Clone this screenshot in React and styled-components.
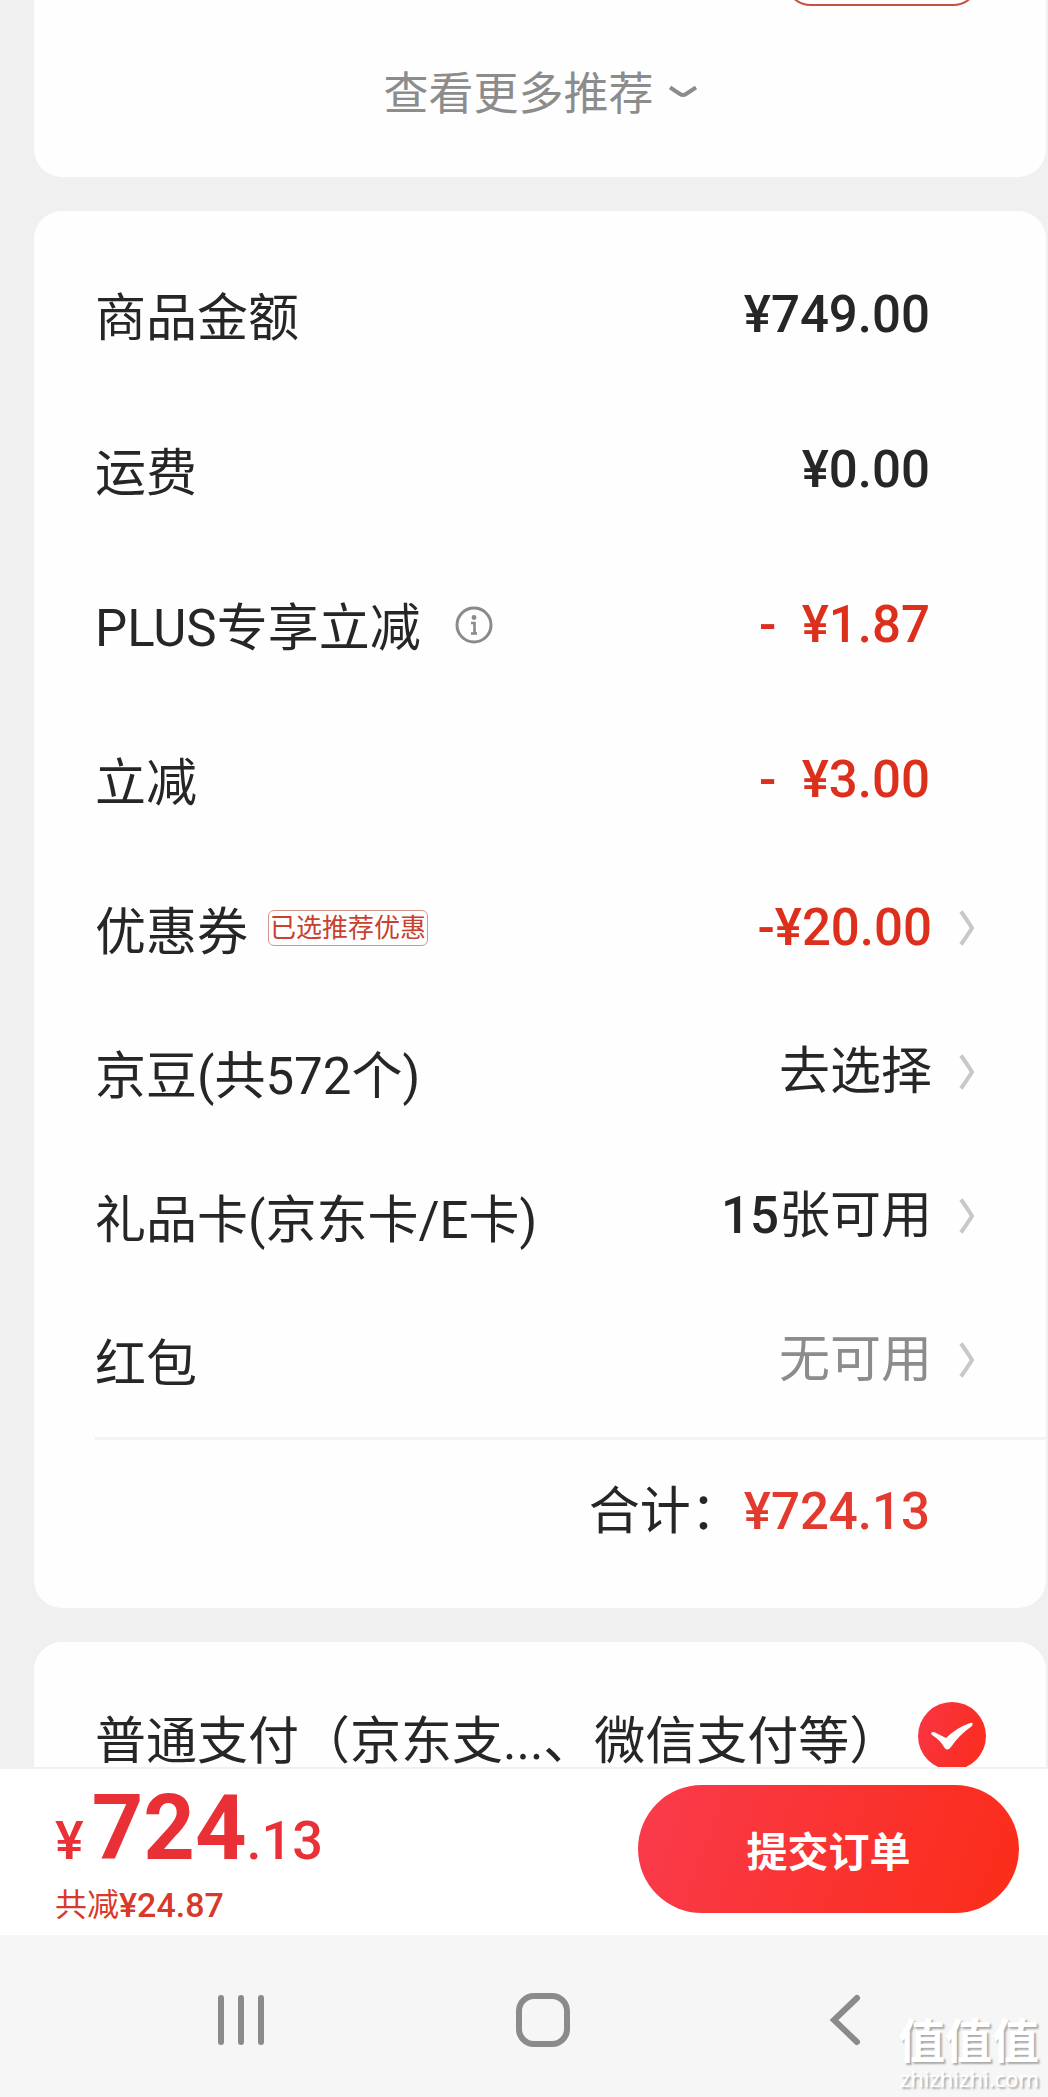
import React, { useState } from "react";
import styled, { createGlobalStyle } from "styled-components";

const GlobalStyle = createGlobalStyle`
  * {
    box-sizing: border-box;
  }
  body {
    margin: 0;
    background: #f0f0f0;
    color: #262626;
    font-family: Roboto, "Noto Sans CJK SC", sans-serif;
  }
  button {
    border: 0;
    padding: 0;
    background: none;
    color: inherit;
    font: inherit;
    cursor: pointer;
  }
`;

const Shell = styled.div`
  display: flex;
  flex-direction: column;
  height: 100vh;
`;

const Content = styled.main`
  flex: 1;
  min-height: 0;
  overflow: hidden;
  display: flex;
  flex-direction: column;
  gap: 34px;
  padding: 0 2px 0 34px;
`;

const Card = styled.section`
  flex: none;
  border-radius: 28px;
  background: #fefefe;
`;

const RecommendCard = styled(Card)`
  display: flex;
  flex-direction: column;
  justify-content: flex-end;
  height: 177px;
  padding-bottom: 50px;
  border-radius: 0 0 28px 28px;
`;

const OutlineButton = styled.button`
  flex: none;
  align-self: flex-end;
  width: 196px;
  height: 54px;
  margin: 0 66px 57px 0;
  border: 2px solid #c8503f;
  border-radius: 27px;
`;

const MoreButton = styled.button`
  flex: none;
  align-self: center;
  display: flex;
  align-items: center;
  gap: 15px;
  color: #8c8c8c;
  font-size: 45px;
  line-height: 64px;

  svg {
    margin-bottom: 6px;
  }
`;

const SummaryCard = styled(Card)`
  padding: 30px 0 0 61px;
`;

const Row = styled.div`
  display: flex;
  align-items: center;
  justify-content: space-between;
  height: ${(p) => (p.$compact ? "144px" : "155px")};
  padding-right: 70px;
  font-size: 51px;
  line-height: 72px;
`;

const RowLabel = styled.div`
  display: flex;
  align-items: center;
`;

const InfoButton = styled.button`
  display: flex;
  margin-left: 34px;
  padding-bottom: 8px;
`;

const Tag = styled.span`
  margin: 0 0 10px 20px;
  padding: 0 1px;
  border: 1px solid #d9958b;
  border-radius: 6px;
  color: #c8402f;
  font-size: 26px;
  line-height: 34px;
`;

const Amount = styled.div`
  display: flex;
  align-items: center;
  padding: 0 46px 8px 0;
  color: ${(p) => (p.$discount ? "#dc2f1c" : "#262626")};
  font-weight: 500;
  white-space: pre;
`;

const Choice = styled.button`
  display: flex;
  align-items: center;
  gap: 26px;
  padding-bottom: 10px;
  color: ${(p) => p.$color || "#262626"};
  font-weight: ${(p) => (p.$strong ? 500 : 400)};

  b {
    font-weight: 500;
  }
`;

const Total = styled.div`
  display: flex;
  justify-content: flex-end;
  align-items: center;
  height: 171px;
  padding: 0 116px 24px 0;
  border-top: 3px solid #f3f3f3;
  font-size: 51px;
  line-height: 72px;

  strong {
    margin-left: 2px;
    color: #e23a2e;
    font-weight: 500;
  }
`;

const PayCard = styled(Card)`
  padding: 60px 60px 60px 61px;
`;

const PayOption = styled.label`
  display: flex;
  align-items: center;
  justify-content: space-between;
  font-size: 51px;
  line-height: 72px;
  white-space: nowrap;
  cursor: pointer;
`;

const PayCheck = styled.span`
  position: relative;
  width: 68px;
  height: 68px;
  margin-bottom: 12px;

  input {
    display: block;
    appearance: none;
    width: 68px;
    height: 68px;
    margin: 0;
    border: 3px solid #cccccc;
    border-radius: 50%;
  }
  input:checked {
    border: 0;
    background: linear-gradient(110deg, #f93545, #fb2c1a);
  }
  svg {
    position: absolute;
    inset: 0;
    pointer-events: none;
  }
`;

const SubmitBar = styled.footer`
  display: flex;
  align-items: flex-start;
  justify-content: space-between;
  padding: 16px 29px 10px 55px;
  border-top: 2px solid #f0f0f0;
  background: #ffffff;
`;

const Price = styled.div`
  display: flex;
  align-items: baseline;
  height: 88px;
  color: #e93036;
  font-size: 54px;
  font-weight: 500;
  line-height: 60px;

  strong {
    margin-left: 8px;
    font-size: 90px;
    font-weight: 700;
    line-height: 88px;
  }
`;

const Saved = styled.div`
  display: flex;
  align-items: center;
  height: 40px;
  margin-top: 12px;
  color: #d8392b;
  font-size: 32px;
  line-height: 40px;

  b {
    font-size: 34px;
    font-weight: 500;
  }
`;

const SubmitButton = styled.button`
  width: 381px;
  height: 128px;
  border-radius: 64px;
  background: linear-gradient(110deg, #f93b4c, #fb2c18);
  color: #ffffff;
  font-size: 41px;
  font-weight: 700;
`;

const NavBar = styled.nav`
  position: relative;
  display: grid;
  grid-template-columns: repeat(3, 1fr);
  height: 162px;
  padding: 8px 52px 0 90px;
  background: #f6f6f6;

  button {
    display: flex;
    align-items: center;
    justify-content: center;
  }
`;

const Watermark = styled.div`
  position: absolute;
  right: 9px;
  bottom: 7px;
  color: #ffffff;
  font-family: "Noto Sans", "Noto Sans CJK SC", sans-serif;
  font-size: 22px;
  line-height: 24px;
  text-align: right;
  text-shadow: 2px 2px 2px #a8a8a8;

  strong {
    display: block;
    font-size: 47px;
    font-weight: 700;
    line-height: 52px;
  }
`;

const Chevron = () => (
  <svg width="18" height="36" viewBox="0 0 18 36" fill="none" stroke="#c8c8c8" strokeWidth="4">
    <path d="M3 1.5 Q9 10 14 18 Q9 26 3 34.5" />
  </svg>
);

const InfoIcon = () => (
  <svg width="38" height="38" viewBox="0 0 38 38" fill="none" stroke="#8a8a8a" strokeWidth="3">
    <circle cx="19" cy="19" r="17" />
    <circle cx="19" cy="11.5" r="2.4" fill="#8a8a8a" stroke="none" />
    <path d="M16 17 H19.5 V27 M16 27.5 H22" strokeWidth="2.6" />
  </svg>
);

const charges = [
  { label: "商品金额", value: "¥749.00" },
  { label: "运费", value: "¥0.00" },
  { label: "PLUS专享立减", value: "-  ¥1.87", discount: true, info: true },
  { label: "立减", value: "-  ¥3.00", discount: true },
];

const choices = [
  { label: "优惠券", tag: "已选推荐优惠", value: "-¥20.00", color: "#dc2f1c", strong: true },
  { label: "京豆(共572个)", value: "去选择" },
  { label: "礼品卡(京东卡/E卡)", value: <><b>15</b>张可用</> },
  { label: "红包", value: "无可用", color: "#8c8c8c" },
];

const App = () => {
  const [paid, setPaid] = useState(true);

  return (
    <Shell>
      <GlobalStyle />
      <Content>
        <RecommendCard>
          <OutlineButton aria-label="加入" />
          <MoreButton>
            查看更多推荐
            <svg width="28" height="14" viewBox="0 0 28 14" fill="none" stroke="#8c8c8c" strokeWidth="4">
              <path d="M1 2.5 L11 9 Q14 11 17 9 L27 2.5" />
            </svg>
          </MoreButton>
        </RecommendCard>

        <SummaryCard>
          {charges.map((item) => (
            <Row key={item.label}>
              <RowLabel>
                {item.label}
                {item.info && (
                  <InfoButton aria-label="说明">
                    <InfoIcon />
                  </InfoButton>
                )}
              </RowLabel>
              <Amount $discount={item.discount}>{item.value}</Amount>
            </Row>
          ))}
          {choices.map((item) => (
            <Row key={item.label} $compact>
              <RowLabel>
                {item.label}
                {item.tag && <Tag>{item.tag}</Tag>}
              </RowLabel>
              <Choice $color={item.color} $strong={item.strong}>
                <span>{item.value}</span>
                <Chevron />
              </Choice>
            </Row>
          ))}
          <Total>
            合计：<strong>¥724.13</strong>
          </Total>
        </SummaryCard>

        <PayCard>
          <PayOption>
            普通支付（京东支...、微信支付等）
            <PayCheck>
              <input type="checkbox" checked={paid} onChange={() => setPaid(!paid)} />
              <svg width="68" height="68" viewBox="0 0 68 68" fill="#ffffff">
                <path d="M13 31 Q15 29 18 31 L28 36 Q38 26 52 21 Q56 20 54 24 Q41 33 33 45 Q29 50 26 45 Q22 38 14 33 Z" />
              </svg>
            </PayCheck>
          </PayOption>
        </PayCard>
      </Content>

      <SubmitBar>
        <div>
          <Price>
            ¥<strong>724</strong>.13
          </Price>
          <Saved>
            共减<b>¥24.87</b>
          </Saved>
        </div>
        <SubmitButton>提交订单</SubmitButton>
      </SubmitBar>

      <NavBar>
        <button aria-label="最近任务">
          <svg width="50" height="54" viewBox="0 0 50 54" stroke="#8b8b8b" strokeWidth="6" strokeLinecap="round">
            <path d="M5 5 V49 M25 5 V49 M45 5 V49" />
          </svg>
        </button>
        <button aria-label="主页">
          <svg width="56" height="56" viewBox="0 0 56 56" fill="none" stroke="#8b8b8b" strokeWidth="6">
            <rect x="4" y="4" width="48" height="48" rx="15" />
          </svg>
        </button>
        <button aria-label="返回">
          <svg width="34" height="54" viewBox="0 0 34 54" fill="none" stroke="#8b8b8b" strokeWidth="6" strokeLinecap="round">
            <path d="M29 5 L6 27 L29 49" />
          </svg>
        </button>
        <Watermark>
          <strong>值值值</strong>
          zhizhizhi.com
        </Watermark>
      </NavBar>
    </Shell>
  );
};

export default App;
